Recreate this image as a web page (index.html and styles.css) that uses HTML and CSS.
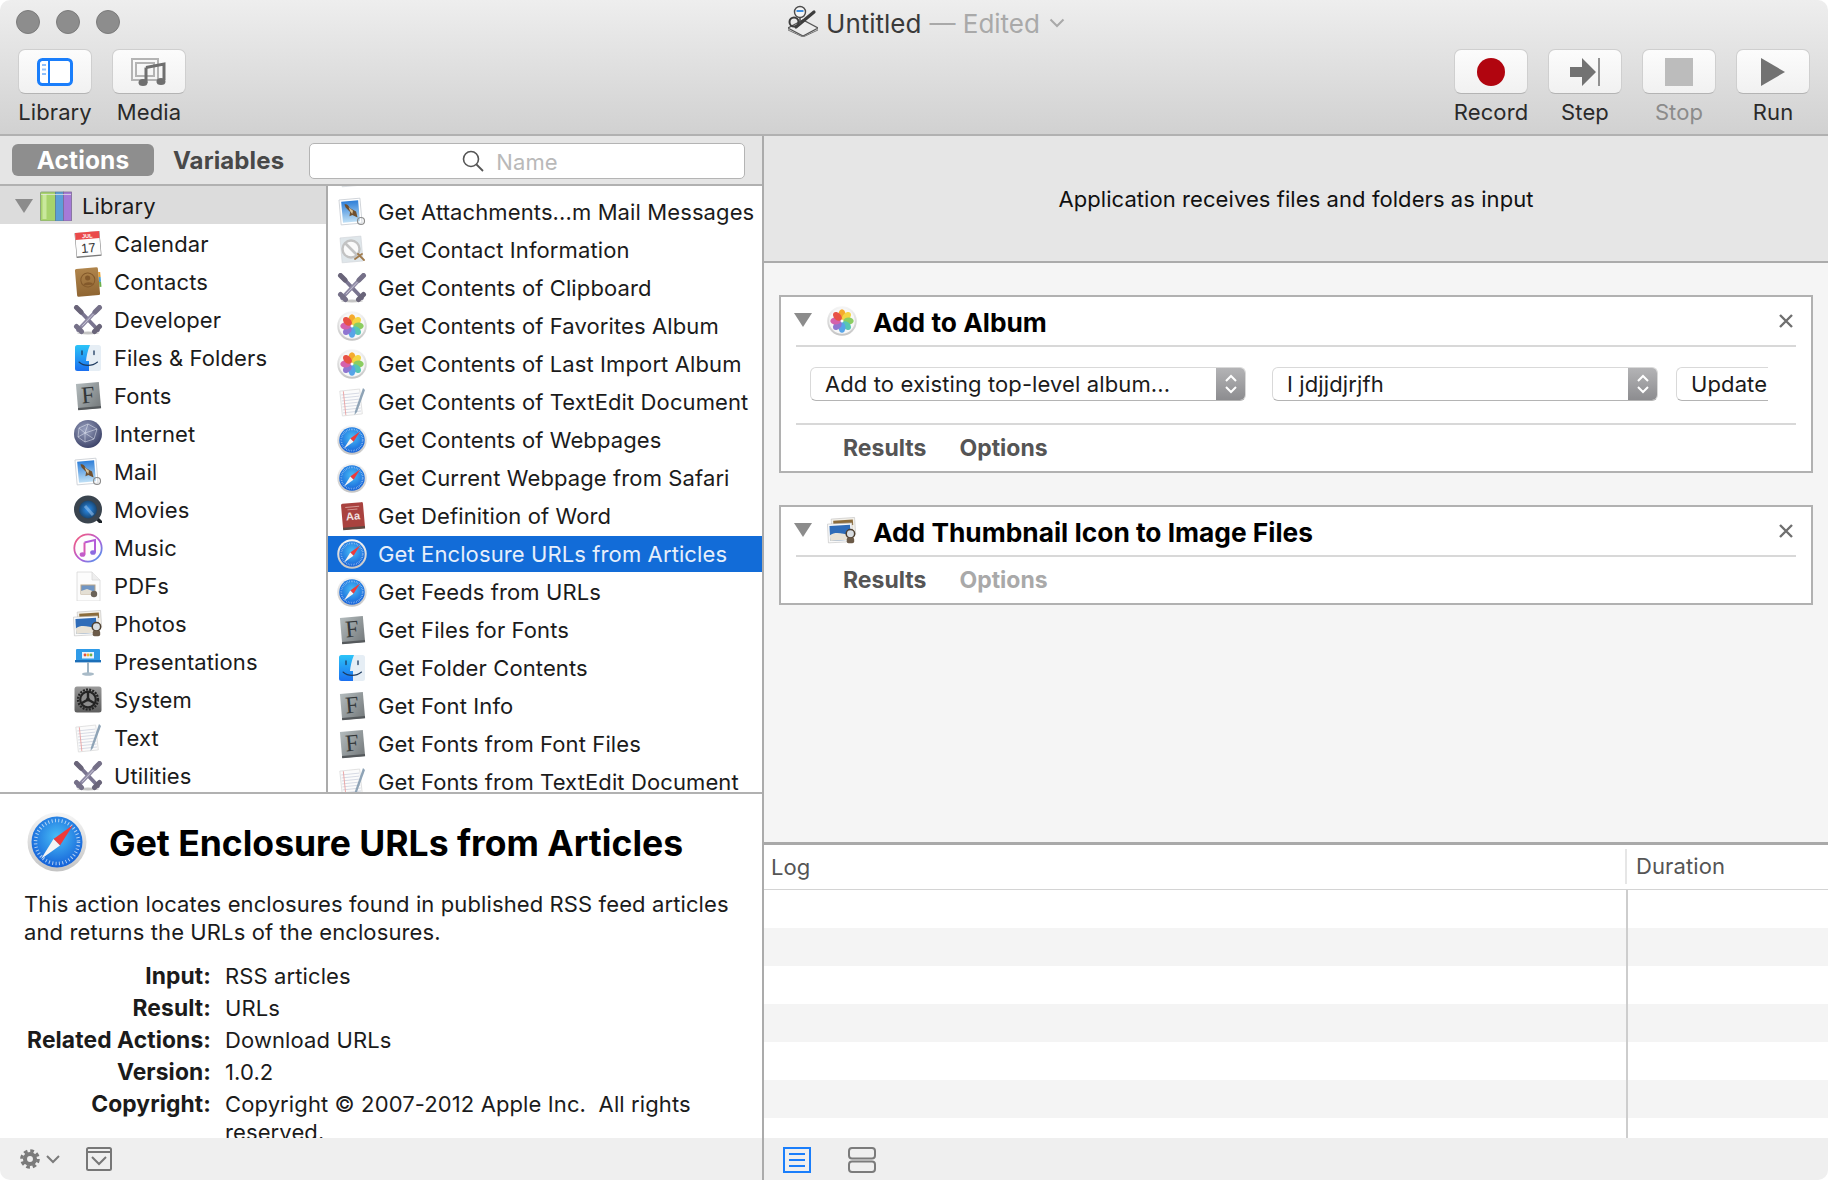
FILE: index.html
```html
<!DOCTYPE html>
<html lang="en">
<head>
<meta charset="utf-8">
<title>Untitled — Edited</title>
<link rel="stylesheet" href="styles.css">
</head>
<body>
<svg class="sprite" aria-hidden="true">
  <defs>
    <radialGradient id="g-safari" cx="50%" cy="40%" r="60%"><stop offset="0" stop-color="#48bdf6"/><stop offset="1" stop-color="#1460d8"/></radialGradient>
    <linearGradient id="g-ring" x1="0" y1="0" x2="0" y2="1"><stop offset="0" stop-color="#f6f6f6"/><stop offset="1" stop-color="#c4c4c4"/></linearGradient>
    <linearGradient id="g-font" x1="0" y1="0" x2="1" y2="1"><stop offset="0" stop-color="#b3bbbd"/><stop offset="1" stop-color="#74797b"/></linearGradient>
    <linearGradient id="g-finder" x1="0" y1="0" x2="0" y2="1"><stop offset="0" stop-color="#2cc4f8"/><stop offset="1" stop-color="#1a6ff0"/></linearGradient>
    <linearGradient id="g-sky" x1="0" y1="0" x2="0" y2="1"><stop offset="0" stop-color="#2f7fd8"/><stop offset="1" stop-color="#bfe0f6"/></linearGradient>
    <linearGradient id="g-contact" x1="0" y1="0" x2="0" y2="1"><stop offset="0" stop-color="#b0854c"/><stop offset="1" stop-color="#8f6532"/></linearGradient>
    <radialGradient id="g-globe" cx="40%" cy="35%" r="70%"><stop offset="0" stop-color="#9aa2c0"/><stop offset="1" stop-color="#3a4066"/></radialGradient>
    <radialGradient id="g-qt" cx="50%" cy="50%" r="50%"><stop offset="0" stop-color="#2a8ff0"/><stop offset="1" stop-color="#14324f"/></radialGradient>
    <linearGradient id="g-music" x1="0" y1="0" x2="1" y2="1"><stop offset="0" stop-color="#fb5c74"/><stop offset=".55" stop-color="#b45cd8"/><stop offset="1" stop-color="#3fa0f0"/></linearGradient>
    <linearGradient id="g-sys" x1="0" y1="0" x2="0" y2="1"><stop offset="0" stop-color="#9a9a9a"/><stop offset="1" stop-color="#5e5e5e"/></linearGradient>

    <symbol id="i-safari" viewBox="0 0 60 60">
      <circle cx="30" cy="30" r="29.500" fill="url(#g-ring)"/>
      <circle cx="30" cy="30" r="25.500" fill="url(#g-safari)"/>
      <circle cx="30" cy="30" r="21.500" fill="none" stroke="#fff" stroke-opacity=".65" stroke-width="3.500" stroke-dasharray="1 2.400"/>
      <polygon points="46,13 26.500,27 33,33.500" fill="#ee3a3a"/>
      <polygon points="14,47 26.500,27 33,33.500" fill="#f4f4f4"/>
    </symbol>

    <symbol id="i-photos" viewBox="0 0 30 30">
      <circle cx="15" cy="15" r="14.800" fill="url(#g-ring)"/>
      <circle cx="15" cy="15" r="12.800" fill="#f7f7f7"/>
      <g opacity=".95">
        <ellipse cx="15" cy="8.500" rx="3.500" ry="5.200" fill="#f5a623"/>
        <ellipse cx="15" cy="8.500" rx="3.500" ry="5.200" fill="#f4d43a" transform="rotate(45 15 15)"/>
        <ellipse cx="15" cy="8.500" rx="3.500" ry="5.200" fill="#86cb5a" transform="rotate(90 15 15)"/>
        <ellipse cx="15" cy="8.500" rx="3.500" ry="5.200" fill="#4fc4b0" transform="rotate(135 15 15)"/>
        <ellipse cx="15" cy="8.500" rx="3.500" ry="5.200" fill="#4fa0e8" transform="rotate(180 15 15)"/>
        <ellipse cx="15" cy="8.500" rx="3.500" ry="5.200" fill="#8a70d0" transform="rotate(225 15 15)"/>
        <ellipse cx="15" cy="8.500" rx="3.500" ry="5.200" fill="#d45aa8" transform="rotate(270 15 15)"/>
        <ellipse cx="15" cy="8.500" rx="3.500" ry="5.200" fill="#e84a3c" transform="rotate(315 15 15)"/>
      </g>
      <circle cx="15" cy="15" r="1.200" fill="#fff"/>
    </symbol>

    <symbol id="i-tools" viewBox="0 0 30 30">
      <ellipse cx="15" cy="28" rx="11" ry="1.500" fill="#c4c4c4"/>
      <g stroke-linecap="round">
        <path d="M5 4L25 25" stroke="#7a7590" stroke-width="3.800"/>
        <path d="M25 4L5 25" stroke="#8e89a4" stroke-width="3.800"/>
        <path d="M3.500 2.500L8 7M21.500 26.500L26.500 21.500" stroke="#696479" stroke-width="5"/>
        <path d="M26.500 2.500L22 7M8.500 26.500L3.500 21.500" stroke="#757088" stroke-width="5"/>
        <path d="M9.500 20.500L20.500 9" stroke="#c9c6d6" stroke-width="1"/>
      </g>
    </symbol>

    <symbol id="i-mail" viewBox="0 0 30 30">
      <g transform="rotate(-5 14 14)">
        <rect x="3" y="2" width="21" height="25" fill="#fff" stroke="#c8ccd2" stroke-width=".8"/>
        <rect x="5" y="4" width="17" height="21" fill="url(#g-sky)"/>
        <path d="M8 7C10 6 12 8 13 11L19 15L20 21L15 18L12 19L13 15L9 10Z" fill="#6f4f2e"/>
        <path d="M12 10L16 14L15 17L13 14Z" fill="#d8c49c"/>
      </g>
      <circle cx="24" cy="24" r="3.500" fill="none" stroke="#8d8d8d" stroke-width="1.200"/>
    </symbol>

    <symbol id="i-nocontact" viewBox="0 0 30 30">
      <g transform="rotate(-5 14 14)">
        <rect x="4" y="2" width="21" height="25" fill="#dfe6ea" stroke="#d0d4d8" stroke-width=".6"/>
      </g>
      <circle cx="14" cy="14" r="8.500" fill="#fafafa" stroke="#c2c2c2" stroke-width="2.400"/>
      <path d="M8.500 8.500L19.500 19.500" stroke="#c2c2c2" stroke-width="2.600"/>
      <path d="M18 24L25 19M21 19L27 25" stroke="#a07a4c" stroke-width="1.800" stroke-linecap="round"/>
    </symbol>

    <symbol id="i-textedit" viewBox="0 0 30 30">
      <g transform="rotate(-6 14 15)">
        <rect x="4" y="3" width="20" height="25" fill="#fbfbfb" stroke="#dcdcdc" stroke-width=".8"/>
        <path d="M5 7H23M5 10H23M5 13H23M5 16H23M5 19H23M5 22H23M5 25H23" stroke="#cfd4e0" stroke-width=".8"/>
        <path d="M7.500 3.500V27.500" stroke="#ea9a9a" stroke-width=".8"/>
      </g>
      <path d="M26 1L18 24L17.500 28L20 25L28 3Z" fill="#8ea3b6"/>
    </symbol>

    <symbol id="i-dict" viewBox="0 0 30 30">
      <g transform="rotate(-5 15 15)">
        <rect x="5" y="2" width="22" height="26" rx="1.500" fill="#a9423f"/>
        <rect x="5" y="26" width="22" height="2.500" fill="#5f4a42"/>
        <path d="M9 6H23M11 8.500H21" stroke="#d69a96" stroke-width="1"/>
        <text x="16" y="19" class="svg-aa">Aa</text>
      </g>
    </symbol>

    <symbol id="i-finder" viewBox="0 0 30 30">
      <rect x="2" y="2" width="26" height="26" rx="2.500" fill="#e6eef5"/>
      <path d="M4.500 2H17C14.500 8 13.500 13 13 18H16V28H4.500A2.500 2.500 0 0 1 2 25.500V4.500A2.500 2.500 0 0 1 4.500 2Z" fill="url(#g-finder)"/>
      <path d="M9 8V11.500M21 8V11.500" stroke="#1d3a5f" stroke-width="1.300" stroke-linecap="round"/>
      <path d="M6 19C11 23.500 19 23.500 24.500 19" fill="none" stroke="#1d3a5f" stroke-width="1.100" stroke-linecap="round"/>
    </symbol>

    <symbol id="i-font" viewBox="0 0 30 30">
      <g transform="rotate(-5 15 15)">
        <rect x="4" y="2" width="23" height="26" fill="url(#g-font)"/>
        <rect x="4" y="26" width="23" height="2.400" fill="#55595c"/>
        <text x="15" y="22" class="svg-f">F</text>
      </g>
    </symbol>

    <symbol id="i-calendar" viewBox="0 0 30 30">
      <g transform="rotate(-5 15 15)">
        <rect x="2.500" y="3" width="25" height="25" fill="#7a7a7a"/>
        <rect x="3" y="3" width="24" height="23.500" fill="#fdfdfd"/>
        <rect x="3" y="3" width="24" height="7" fill="#ea4a4a"/>
        <text x="15" y="8.800" class="svg-jul">JUL</text>
        <text x="15" y="23.500" class="svg-day">17</text>
      </g>
    </symbol>

    <symbol id="i-contacts" viewBox="0 0 30 30">
      <g transform="rotate(-5 15 15)">
        <rect x="26" y="6" width="2" height="5" fill="#e8a02e"/>
        <rect x="26" y="11" width="2" height="5" fill="#4aa0d8"/>
        <rect x="26" y="16" width="2" height="5" fill="#6cb04a"/>
        <rect x="3" y="1" width="23" height="28" rx="1.500" fill="url(#g-contact)"/>
        <circle cx="15" cy="13" r="7" fill="none" stroke="#83592b" stroke-width="1"/>
        <circle cx="15" cy="11" r="2.600" fill="#83592b"/>
        <path d="M10 18C11 14.500 19 14.500 20 18Z" fill="#83592b"/>
      </g>
    </symbol>

    <symbol id="i-internet" viewBox="0 0 30 30">
      <circle cx="15" cy="15" r="14" fill="url(#g-globe)"/>
      <path d="M6 9L15 5L24 10L21 20L12 23L5 18ZM15 5L12 14L21 20M12 14L6 9M12 14L12 23M24 10L12 14M5 18L12 14" fill="none" stroke="#e8ebf6" stroke-opacity=".75" stroke-width=".7"/>
    </symbol>

    <symbol id="i-qt" viewBox="0 0 30 30">
      <path d="M21 23L26 28H29L29 26L24 21Z" fill="#1d2329"/>
      <circle cx="15" cy="14.500" r="11.500" fill="url(#g-qt)" stroke="#3a444e" stroke-width="5"/>
      <path d="M12 11L20 20" stroke="#9fc6ec" stroke-width="3" opacity=".55"/>
    </symbol>

    <symbol id="i-music" viewBox="0 0 30 30">
      <circle cx="15" cy="15" r="13.700" fill="#fdfdfd" stroke="url(#g-music)" stroke-width="1.800"/>
      <path d="M11.500 9.500L22 7V19.500" fill="none" stroke="#b45cd8" stroke-width="2"/>
      <path d="M11.500 9.500V21.500" fill="none" stroke="#d65ab4" stroke-width="2"/>
      <ellipse cx="9.500" cy="21.500" rx="2.800" ry="2.300" fill="#c25cc8"/>
      <ellipse cx="20" cy="19.500" rx="2.800" ry="2.300" fill="#8c6ce0"/>
    </symbol>

    <symbol id="i-pdf" viewBox="0 0 30 30">
      <path d="M4 1H19L27 9V30H4Z" fill="#fcfcfc" stroke="#d8d8d8" stroke-width=".8"/>
      <path d="M19 1V9H27" fill="#eee" stroke="#d8d8d8" stroke-width=".8"/>
      <rect x="8" y="14" width="14" height="9" fill="#6f95c4" stroke="#b5a48a"/>
      <path d="M8 20L14 18L22 21V23H8Z" fill="#e4dfd4"/>
      <circle cx="21" cy="23" r="3.200" fill="#6a6258"/>
    </symbol>

    <symbol id="i-iphoto" viewBox="0 0 32 30">
      <rect x="5" y="1.500" width="25" height="18" fill="#f4f1ea" stroke="#bdbdbd" stroke-width=".6" transform="rotate(-4 16 10)"/>
      <rect x="7" y="3.500" width="21" height="6" fill="#8b6c3c" transform="rotate(-4 16 10)"/>
      <rect x="1" y="7" width="26" height="20" fill="#fafafa" stroke="#bdbdbd" stroke-width=".6" transform="rotate(-3 14 17)"/>
      <rect x="3" y="9" width="22" height="16" fill="#2f6cb8" transform="rotate(-3 14 17)"/>
      <path d="M3 19C9 15 16 18 25 20V25H3Z" fill="#e8e2d6" transform="rotate(-3 14 17)"/>
      <circle cx="25" cy="18" r="4.500" fill="#d8dde2" stroke="#4d3f30" stroke-width="1.600"/>
      <rect x="21" y="22" width="8" height="6" rx="2" fill="#6b5a48"/>
    </symbol>

    <symbol id="i-keynote" viewBox="0 0 30 30">
      <rect x="3" y="2" width="24" height="13" rx="1" fill="#2f9be8"/>
      <rect x="2" y="13" width="26" height="2.400" fill="#1c6fb8"/>
      <rect x="9" y="5" width="12" height="6.500" fill="#e8f2fb"/>
      <circle cx="12" cy="8" r="1.400" fill="#e8503f"/><circle cx="15" cy="8" r="1.400" fill="#f2b632"/><circle cx="18" cy="8" r="1.400" fill="#6cb04a"/>
      <rect x="14" y="15" width="2" height="11" fill="#9fb4c4"/>
      <ellipse cx="15" cy="27" rx="6" ry="1.800" fill="#a9bbc8"/>
    </symbol>

    <symbol id="i-system" viewBox="0 0 30 30">
      <rect x="1.500" y="1.500" width="27" height="26" rx="2.500" fill="url(#g-sys)"/>
      <circle cx="15" cy="14.500" r="10" fill="none" stroke="#242424" stroke-width="2.200" stroke-dasharray="2 1.200"/>
      <circle cx="15" cy="14.500" r="7.800" fill="#8d8d8d" stroke="#242424" stroke-width="2.200"/>
      <path d="M15 14.500V7M15 14.500L8.500 18.300M15 14.500L21.500 18.300" stroke="#242424" stroke-width="2.400"/>
      <circle cx="15" cy="14.500" r="2" fill="#242424"/>
    </symbol>

    <symbol id="i-books" viewBox="0 0 32 30">
      <rect x="0.500" y="1" width="15" height="29" rx="1" fill="#a8d46c" stroke="#7f9a72" stroke-width=".8"/>
      <rect x="2.500" y="3" width="4" height="25" fill="#c9e89c"/>
      <rect x="15.500" y="1" width="8" height="29" fill="#5c9fd8" stroke="#5d7f9a" stroke-width=".8"/>
      <rect x="23.500" y="1" width="8" height="29" fill="#a57ad8" stroke="#7d6a96" stroke-width=".8"/>
      <path d="M1 3.500H31" stroke="#e8e8e8" stroke-opacity=".7" stroke-width="1"/>
    </symbol>
  </defs>
</svg>

<div class="window">
  <header class="chrome">
    <div class="titlebar">
      <div class="lights"><span class="light"></span><span class="light"></span><span class="light"></span></div>
      <div class="doc-title">
        <svg class="doc-icon" viewBox="0 0 30 32"><path d="M0 23L15 15L30 23L15 31Z" fill="#ececec" stroke="#555" stroke-width="1.200"/><path d="M0 23V25L15 32L30 25V23" fill="none" stroke="#777"/><circle cx="6" cy="17" r="4.500" fill="none" stroke="#3d3d3d" stroke-width="2"/><path d="M8 22L26 7" stroke="#3d3d3d" stroke-width="3.200" stroke-linecap="round"/><circle cx="12" cy="7" r="5.500" fill="#f4f4f4" stroke="#4a4a4a" stroke-width="1.400"/><path d="M8.500 6H15.500" stroke="#3f8fe0" stroke-width="2"/><path d="M12 13V19" stroke="#4a4a4a" stroke-width="1.500"/></svg>
        <span class="doc-name">Untitled</span>
        <span class="doc-state">— Edited</span>
        <svg class="doc-chevron" viewBox="0 0 16 10"><path d="M1.500 1.500L8 8L14.500 1.500" fill="none" stroke="#a9a9a9" stroke-width="2"/></svg>
      </div>
      <div></div>
    </div>
    <div class="toolbar">
      <div class="tool-group">
        <div class="tool">
          <div class="tool-btn"><svg class="tool-ico" viewBox="0 0 36 28"><rect x="1.500" y="1.500" width="33" height="25" rx="4" fill="#fff" stroke="#1a7efb" stroke-width="3"/><path d="M12 2V26" stroke="#1a7efb" stroke-width="2"/><path d="M5 7H9M5 11.500H9M5 16H9" stroke="#8fc0fb" stroke-width="2"/></svg></div>
          <span class="tool-label">Library</span>
        </div>
        <div class="tool">
          <div class="tool-btn"><svg class="tool-ico" viewBox="0 0 36 28"><rect x="1" y="1" width="26" height="21" fill="none" stroke="#b4b4b4" stroke-width="2"/><rect x="5" y="5" width="18" height="13" fill="none" stroke="#b4b4b4" stroke-width="2"/><path d="M15 9.500L33 6V22" fill="none" stroke="#6f6f6f" stroke-width="3"/><path d="M15 9.500V25" stroke="#6f6f6f" stroke-width="3"/><ellipse cx="12" cy="24.500" rx="4.500" ry="3.500" fill="#6f6f6f"/><ellipse cx="30" cy="23.500" rx="4.500" ry="3.500" fill="#6f6f6f"/></svg></div>
          <span class="tool-label">Media</span>
        </div>
      </div>
      <div class="tool-group">
        <div class="tool">
          <div class="tool-btn"><svg class="tool-ico" viewBox="0 0 36 28"><circle cx="18" cy="14" r="14" fill="#b1050f"/></svg></div>
          <span class="tool-label">Record</span>
        </div>
        <div class="tool">
          <div class="tool-btn"><svg class="tool-ico" viewBox="0 0 36 28"><path d="M3 9H15V0L29 14L15 28V19H3Z" fill="#727272"/><path d="M32 0V28" stroke="#727272" stroke-width="1.500"/></svg></div>
          <span class="tool-label">Step</span>
        </div>
        <div class="tool">
          <div class="tool-btn"><svg class="tool-ico" viewBox="0 0 36 28"><rect x="4" y="0" width="28" height="28" fill="#bcbcbc"/></svg></div>
          <span class="tool-label tool-label-off">Stop</span>
        </div>
        <div class="tool">
          <div class="tool-btn"><svg class="tool-ico" viewBox="0 0 36 28"><path d="M6 0L30 14L6 28Z" fill="#727272"/></svg></div>
          <span class="tool-label">Run</span>
        </div>
      </div>
    </div>
  </header>

  <main class="main">
    <section class="left">
      <div class="tabs">
        <span class="tab-on">Actions</span>
        <span class="tab-off">Variables</span>
        <div class="search">
          <svg class="search-ico" viewBox="0 0 22 22"><circle cx="9" cy="9" r="7.500" fill="none" stroke="#555" stroke-width="1.600"/><path d="M14.500 14.500L21 21" stroke="#555" stroke-width="1.800"/></svg>
          <span class="search-text">Name</span>
        </div>
      </div>

      <div class="browser">
        <div class="cats">
          <div class="cat-root">
            <svg class="tri" viewBox="0 0 18 14"><path d="M0 0H18L9 14Z"/></svg>
            <svg class="books"><use href="#i-books"/></svg>
            <span>Library</span>
          </div>
          <div class="cat"><svg class="ico"><use href="#i-calendar"/></svg><span>Calendar</span></div>
          <div class="cat"><svg class="ico"><use href="#i-contacts"/></svg><span>Contacts</span></div>
          <div class="cat"><svg class="ico"><use href="#i-tools"/></svg><span>Developer</span></div>
          <div class="cat"><svg class="ico"><use href="#i-finder"/></svg><span>Files &amp; Folders</span></div>
          <div class="cat"><svg class="ico"><use href="#i-font"/></svg><span>Fonts</span></div>
          <div class="cat"><svg class="ico"><use href="#i-internet"/></svg><span>Internet</span></div>
          <div class="cat"><svg class="ico"><use href="#i-mail"/></svg><span>Mail</span></div>
          <div class="cat"><svg class="ico"><use href="#i-qt"/></svg><span>Movies</span></div>
          <div class="cat"><svg class="ico"><use href="#i-music"/></svg><span>Music</span></div>
          <div class="cat"><svg class="ico"><use href="#i-pdf"/></svg><span>PDFs</span></div>
          <div class="cat"><svg class="ico"><use href="#i-iphoto"/></svg><span>Photos</span></div>
          <div class="cat"><svg class="ico"><use href="#i-keynote"/></svg><span>Presentations</span></div>
          <div class="cat"><svg class="ico"><use href="#i-system"/></svg><span>System</span></div>
          <div class="cat"><svg class="ico"><use href="#i-textedit"/></svg><span>Text</span></div>
          <div class="cat"><svg class="ico"><use href="#i-tools"/></svg><span>Utilities</span></div>
        </div>
        <div class="actions">
          <div class="action"><svg class="ico"><use href="#i-nocontact"/></svg></div>
          <div class="action"><svg class="ico"><use href="#i-mail"/></svg><span>Get Attachments...m Mail Messages</span></div>
          <div class="action"><svg class="ico"><use href="#i-nocontact"/></svg><span>Get Contact Information</span></div>
          <div class="action"><svg class="ico"><use href="#i-tools"/></svg><span>Get Contents of Clipboard</span></div>
          <div class="action"><svg class="ico"><use href="#i-photos"/></svg><span>Get Contents of Favorites Album</span></div>
          <div class="action"><svg class="ico"><use href="#i-photos"/></svg><span>Get Contents of Last Import Album</span></div>
          <div class="action"><svg class="ico"><use href="#i-textedit"/></svg><span>Get Contents of TextEdit Document</span></div>
          <div class="action"><svg class="ico"><use href="#i-safari"/></svg><span>Get Contents of Webpages</span></div>
          <div class="action"><svg class="ico"><use href="#i-safari"/></svg><span>Get Current Webpage from Safari</span></div>
          <div class="action"><svg class="ico"><use href="#i-dict"/></svg><span>Get Definition of Word</span></div>
          <div class="action action-sel"><svg class="ico"><use href="#i-safari"/></svg><span>Get Enclosure URLs from Articles</span></div>
          <div class="action"><svg class="ico"><use href="#i-safari"/></svg><span>Get Feeds from URLs</span></div>
          <div class="action"><svg class="ico"><use href="#i-font"/></svg><span>Get Files for Fonts</span></div>
          <div class="action"><svg class="ico"><use href="#i-finder"/></svg><span>Get Folder Contents</span></div>
          <div class="action"><svg class="ico"><use href="#i-font"/></svg><span>Get Font Info</span></div>
          <div class="action"><svg class="ico"><use href="#i-font"/></svg><span>Get Fonts from Font Files</span></div>
          <div class="action"><svg class="ico"><use href="#i-textedit"/></svg><span>Get Fonts from TextEdit Document</span></div>
        </div>
      </div>

      <div class="info">
        <div class="info-head">
          <svg class="info-ico"><use href="#i-safari"/></svg>
          <h1 class="info-title">Get Enclosure URLs from Articles</h1>
        </div>
        <p class="info-desc">This action locates enclosures found in published RSS feed articles and returns the URLs of the enclosures.</p>
        <dl class="meta">
          <dt>Input:</dt><dd>RSS articles</dd>
          <dt>Result:</dt><dd>URLs</dd>
          <dt>Related Actions:</dt><dd>Download URLs</dd>
          <dt>Version:</dt><dd>1.0.2</dd>
          <dt>Copyright:</dt><dd>Copyright © 2007-2012 Apple Inc. &nbsp;All rights reserved.</dd>
        </dl>
      </div>

      <footer class="foot foot-left">
        <svg class="gear" viewBox="0 0 22 22"><circle cx="11" cy="11" r="5.500" fill="none" stroke="#7b7b7b" stroke-width="4.500"/><circle cx="11" cy="11" r="9" fill="none" stroke="#7b7b7b" stroke-width="3.600" stroke-dasharray="4 3.070"/></svg>
        <svg class="gear-chev" viewBox="0 0 14 9"><path d="M1 1L7 7L13 1" fill="none" stroke="#7b7b7b" stroke-width="2"/></svg>
        <svg class="toggle" viewBox="0 0 26 24"><rect x="1" y="1" width="24" height="22" rx="1.500" fill="none" stroke="#777" stroke-width="2"/><path d="M1 5H25" stroke="#777" stroke-width="2"/><path d="M6 10L13 17L20 10" fill="none" stroke="#777" stroke-width="2"/></svg>
      </footer>
    </section>

    <section class="right">
      <div class="input-note">Application receives files and folders as input</div>
      <div class="workflow">
        <article class="card">
          <div class="card-head">
            <svg class="tri" viewBox="0 0 18 14"><path d="M0 0H18L9 14Z"/></svg>
            <svg class="ico"><use href="#i-photos"/></svg>
            <h2 class="card-title">Add to Album</h2>
            <svg class="close" viewBox="0 0 14 14"><path d="M1 1L13 13M13 1L1 13" stroke="#6f6f6f" stroke-width="2.400"/></svg>
          </div>
          <div class="controls">
            <div class="select select-a"><span class="select-text">Add to existing top-level album...</span><span class="stepper"><svg viewBox="0 0 14 22"><path d="M2 8L7 3L12 8M2 14L7 19L12 14" fill="none" stroke="#fff" stroke-width="2"/></svg></span></div>
            <div class="select select-b"><span class="select-text">I jdjjdjrjfh</span><span class="stepper"><svg viewBox="0 0 14 22"><path d="M2 8L7 3L12 8M2 14L7 19L12 14" fill="none" stroke="#fff" stroke-width="2"/></svg></span></div>
            <div class="update">Update</div>
          </div>
          <div class="card-tabs"><span>Results</span><span>Options</span></div>
        </article>
        <article class="card">
          <div class="card-head">
            <svg class="tri" viewBox="0 0 18 14"><path d="M0 0H18L9 14Z"/></svg>
            <svg class="ico"><use href="#i-iphoto"/></svg>
            <h2 class="card-title">Add Thumbnail Icon to Image Files</h2>
            <svg class="close" viewBox="0 0 14 14"><path d="M1 1L13 13M13 1L1 13" stroke="#6f6f6f" stroke-width="2.400"/></svg>
          </div>
          <div class="card-tabs"><span>Results</span><span class="card-tab-off">Options</span></div>
        </article>
      </div>
      <div class="log">
        <div class="log-head"><span class="log-col">Log</span><span class="dur-col">Duration</span></div>
        <div class="log-row"></div>
        <div class="log-row"></div>
        <div class="log-row"></div>
        <div class="log-row"></div>
        <div class="log-row"></div>
        <div class="log-row"></div>
        <div class="log-row"></div>
      </div>
      <footer class="foot foot-right">
        <svg class="view-ico" viewBox="0 0 28 26"><rect x="1" y="1" width="26" height="24" fill="none" stroke="#1a7efb" stroke-width="2"/><path d="M6 7H22M6 13H22M6 19H22" stroke="#1a7efb" stroke-width="2"/></svg>
        <svg class="view-ico" viewBox="0 0 28 26"><rect x="1" y="1" width="26" height="10.500" rx="3" fill="none" stroke="#7b7b7b" stroke-width="2"/><rect x="1" y="14.500" width="26" height="10.500" rx="3" fill="none" stroke="#7b7b7b" stroke-width="2"/></svg>
      </footer>
    </section>
  </main>
</div>
</body>
</html>
```

FILE: styles.css
```css
* { box-sizing: border-box; }
html, body { margin: 0; padding: 0; background: #fff; }
body { font-family: Inter, "Noto Sans", "Liberation Sans", sans-serif; font-size: 22px; letter-spacing: .11px; color: #1b1b1b; }
.sprite { position: absolute; width: 0; height: 0; overflow: hidden; }

/* Text inside the small icons */
.svg-f { font-family: "Liberation Serif", serif; font-size: 24px; text-anchor: middle; fill: #34383a; letter-spacing: 0; }
.svg-aa { font-family: "Liberation Sans", sans-serif; font-size: 11px; font-weight: 700; text-anchor: middle; fill: #f2e4e2; letter-spacing: 0; }
.svg-jul { font-family: "Liberation Sans", sans-serif; font-size: 5.500px; font-weight: 700; text-anchor: middle; fill: #fff; letter-spacing: 0; }
.svg-day { font-family: "Liberation Sans", sans-serif; font-size: 13px; text-anchor: middle; fill: #333; letter-spacing: 0; }

.window { width: 1828px; height: 1180px; display: flex; flex-direction: column; overflow: hidden; border-radius: 10px; }

/* Chrome */
.chrome { height: 136px; flex: none; border-bottom: 2px solid #b1b1b1; background: linear-gradient(#eeeeee, #d1d1d1); }
.titlebar { height: 44px; display: grid; grid-template-columns: 1fr auto 1fr; align-items: center; }
.lights { display: flex; gap: 16px; padding-left: 16px; }
.light { width: 24px; height: 24px; border-radius: 50%; background: #8d8d8d; border: 1px solid #7b7b7b; }
.doc-title { display: flex; align-items: center; margin-left: 25px; padding-top: 2px; font-size: 26px; letter-spacing: 0; }
.doc-icon { width: 30px; height: 32px; margin-right: 8px; margin-top: -4px; }
.doc-name { color: #3a3a3a; }
.doc-state { color: #a9a9a9; margin-left: 8px; }
.doc-chevron { width: 16px; height: 10px; margin-left: 9px; }

.toolbar { display: flex; justify-content: space-between; padding: 5px 18px 0; }
.tool-group { display: flex; gap: 20px; }
.tool { width: 74px; display: flex; flex-direction: column; align-items: center; gap: 5px; }
.tool-btn { width: 74px; height: 45px; border-radius: 7px; border: 1px solid #cfcfcf; border-bottom-color: #b4b4b4; background: linear-gradient(#fcfcfc, #f1f1f1); display: flex; align-items: center; justify-content: center; }
.tool-ico { width: 36px; height: 28px; }
.tool-label { font-size: 22px; line-height: 26px; color: #2a2a2a; white-space: nowrap; }
.tool-label-off { color: #8b8b8b; }

/* Layout */
.main { flex: 1; min-height: 0; display: flex; }
.left { width: 762px; flex: none; display: flex; flex-direction: column; }
.right { flex: 1; min-width: 0; display: flex; flex-direction: column; border-left: 2px solid #ababab; }

/* Left tabs */
.tabs { height: 50px; flex: none; display: flex; align-items: center; padding: 0 17px 0 12px; background: #e5e5e5; border-bottom: 2px solid #b1b1b1; }
.tab-on { width: 142px; height: 32px; border-radius: 6px; background: #8e8e8e; color: #fff; font-weight: 700; font-size: 24.500px; display: flex; align-items: center; justify-content: center; }
.tab-off { margin-left: 19px; font-weight: 700; font-size: 24px; color: #484848; }
.search { margin: 1px 0 0 auto; width: 436px; height: 36px; border-radius: 5px; background: #fff; border: 1px solid #b4b4b4; display: flex; align-items: center; justify-content: center; gap: 12px; padding: 0 34px 0 0; }
.search-ico { width: 22px; height: 22px; }
.search-text { color: #b9b9b9; font-size: 22px; margin-top: 2px; }

/* Lists */
.browser { height: 606px; flex: none; display: flex; overflow: hidden; background: #fff; }
.cats { width: 328px; flex: none; border-right: 2px solid #ababab; overflow: hidden; }
.cat-root { height: 38px; display: flex; align-items: center; background: #dcdcdc; padding: 2px 0 0 15px; }
.cat-root span { margin-left: 10px; }
.books { width: 32px; height: 30px; margin-left: 7px; }
.tri { width: 18px; height: 14px; flex: none; fill: #8c8c8c; }
.ico { width: 30px; height: 30px; flex: none; }
.cat { height: 36px; margin-top: 2px; display: flex; align-items: center; gap: 11px; padding-left: 73px; white-space: nowrap; }
.actions { flex: 1; min-width: 0; overflow: hidden; margin-top: -30px; }
.action { height: 36px; margin-bottom: 2px; display: flex; align-items: center; gap: 11px; padding-left: 9px; white-space: nowrap; }
.action-sel { background: #126cd8; color: #e6effb; }

/* Info */
.info { flex: 1; min-height: 0; overflow: hidden; background: #fff; border-top: 2px solid #b1b1b1; padding: 18px 0 0 24px; }
.info-head { display: flex; align-items: center; gap: 22px; padding-left: 3px; height: 60px; }
.info-ico { width: 60px; height: 60px; flex: none; }
.info-title { margin: 2px 0 0; font-size: 35.500px; font-weight: 700; letter-spacing: 0; color: #000; white-space: nowrap; }
.info-desc { margin: 18px 0 0; width: 720px; line-height: 28px; }
.meta { margin: 16px 0 0; display: grid; grid-template-columns: 187px 1fr; column-gap: 14px; row-gap: 4px; line-height: 28px; }
.meta dt { text-align: right; font-weight: 700; font-size: 22.800px; white-space: nowrap; }
.meta dd { margin: 0; width: 490px; }

/* Footers */
.foot { height: 42px; flex: none; background: #efefef; display: flex; align-items: center; }
.foot-left { padding-left: 20px; }
.gear { width: 20px; height: 20px; }
.gear-chev { width: 14px; height: 9px; margin-left: 6px; }
.toggle { width: 26px; height: 24px; margin-left: 26px; }
.foot-right { padding: 2px 0 0 19px; gap: 37px; }
.view-ico { width: 28px; height: 26px; }

/* Right */
.input-note { height: 127px; flex: none; background: #e6e6e6; border-bottom: 2px solid #ababab; display: flex; align-items: center; justify-content: center; color: #111; letter-spacing: .07px; }
.workflow { flex: 1; min-height: 0; background: #f5f5f5; padding: 32px 15px 0; display: flex; flex-direction: column; gap: 32px; }
.card { background: #fff; border: 2px solid #b1b1b1; padding: 0 15px; }
.card-head { height: 50px; display: flex; align-items: center; border-bottom: 2px solid #d8d8d8; }
.card-head .tri { margin-left: -2px; margin-right: 15px; margin-top: -2px; }
.card-title { margin: 2px 0 0 16px; font-size: 26.300px; font-weight: 700; letter-spacing: 0; color: #000; white-space: nowrap; }
.close { width: 14px; height: 14px; margin-left: auto; margin-right: 3px; margin-top: -1px; }
.controls { height: 78px; display: flex; align-items: center; padding: 0 0 3px 14px; border-bottom: 2px solid #d8d8d8; }
.select { height: 34px; display: flex; align-items: center; border: 1px solid #d9d9d9; border-bottom-color: #b4b4b4; border-radius: 6px; background: #fff; overflow: hidden; }
.select-a { width: 436px; }
.select-b { width: 386px; margin-left: 26px; }
.select-text { flex: 1; padding-left: 14px; white-space: nowrap; }
.stepper { width: 29px; height: 34px; flex: none; background: linear-gradient(#b5b5b7, #8b8b8e); display: flex; align-items: center; justify-content: center; }
.stepper svg { width: 14px; height: 22px; }
.update { width: 92px; height: 34px; margin-left: 18px; border: 1px solid #d9d9d9; border-right: 0; border-bottom-color: #b4b4b4; border-radius: 6px 0 0 6px; background: #fff; padding-left: 14px; line-height: 32px; overflow: hidden; white-space: nowrap; }
.card-tabs { height: 46px; display: flex; align-items: center; gap: 33px; padding-left: 47px; font-weight: 700; font-size: 23px; letter-spacing: 0; color: #555; }
.card-tab-off { color: #a9a9a9; }

/* Log */
.log { height: 296px; flex: none; border-top: 3px solid #a9a9a9; background: #fff; overflow: hidden; }
.log-head { height: 45px; display: flex; align-items: center; border-bottom: 1px solid #d4d4d4; color: #555; font-size: 22px; padding-bottom: 1px; }
.log-col { width: 861px; padding-left: 7px; }
.dur-col { height: 35px; line-height: 35px; border-left: 2px solid #e6e6e6; padding-left: 9px; }
.log-row { height: 38px; }
.log-row:nth-child(odd) { background: #f4f4f4; }
.log-row::before { content: ""; display: block; width: 862px; height: 100%; border-right: 2px solid #cdcdcd; }
```
